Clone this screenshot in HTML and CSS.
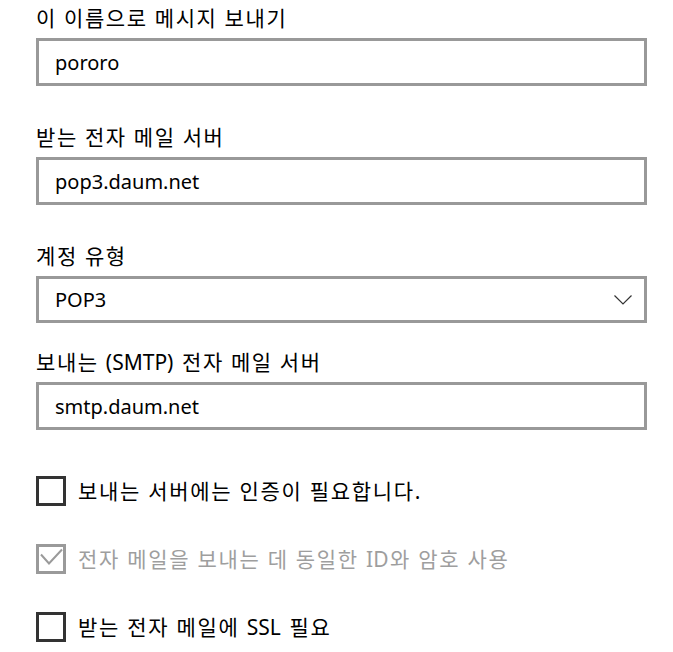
FILE: index.html
```html
<!DOCTYPE html>
<html lang="ko">
<head>
<meta charset="utf-8">
<link rel="stylesheet" href="styles.css">
</head>
<body>
<div class="form">
  <div class="field">
    <div class="label">이 이름으로 메시지 보내기</div>
    <div class="box">pororo</div>
  </div>
  <div class="field">
    <div class="label">받는 전자 메일 서버</div>
    <div class="box">pop3.daum.net</div>
  </div>
  <div class="field field-select">
    <div class="label">계정 유형</div>
    <div class="box select"><span>POP3</span>
      <svg class="chev" width="18" height="10" viewBox="0 0 18 10"><path d="M0.5 0.5 L9 9 L17.5 0.5" fill="none" stroke="#333" stroke-width="1.2"/></svg>
    </div>
  </div>
  <div class="field field-last">
    <div class="label">보내는 <span class="en">(SMTP)</span> 전자 메일 서버</div>
    <div class="box">smtp.daum.net</div>
  </div>
  <div class="checks">
    <div class="check">
      <span class="cb"></span>
      <span class="ctext">보내는 서버에는 인증이 필요합니다.</span>
    </div>
    <div class="check disabled">
      <span class="cb"><svg width="24" height="24" viewBox="0 0 24 24"><path d="M2 7.5 L10 16.5 L23 2.5" fill="none" stroke="#9a9a9a" stroke-width="2"/></svg></span>
      <span class="ctext">전자 메일을 보내는 데 동일한 <span class="en">ID</span>와 암호 사용</span>
    </div>
    <div class="check">
      <span class="cb"></span>
      <span class="ctext">받는 전자 메일에 <span class="en">SSL</span> 필요</span>
    </div>
  </div>
</div>
</body>
</html>
```
FILE: styles.css
```css
html, body {
  margin: 0;
  padding: 0;
  background: #fff;
}
body {
  font-family: "Noto Sans", "Noto Sans CJK KR", sans-serif;
  color: #000;
}
.form {
  padding: 4px 26px 0 36px;
  display: flex;
  flex-direction: column;
}
.field {
  display: flex;
  flex-direction: column;
  gap: 6px;
  margin-bottom: 37px;
}
.field-select {
  margin-bottom: 25px;
}
.field-last {
  margin-bottom: 46px;
}
.label {
  font-size: 21px;
  line-height: 28px;
  height: 28px;
  letter-spacing: 1.6px;
}
.en {
  letter-spacing: 0;
  margin-right: 1.6px;
}
.box {
  box-sizing: border-box;
  height: 48px;
  border: 3px solid #999;
  padding: 0 16px;
  display: flex;
  align-items: center;
  font-size: 20px;
}
.select {
  height: 47px;
  justify-content: space-between;
  padding-right: 12px;
}
.checks {
  display: flex;
  flex-direction: column;
  gap: 38px;
}
.check {
  display: flex;
  align-items: center;
  gap: 12px;
  height: 30px;
}
.cb {
  box-sizing: border-box;
  width: 30px;
  height: 30px;
  border: 3px solid #333;
  display: flex;
  align-items: center;
  justify-content: center;
}
.ctext {
  font-size: 21px;
  line-height: 28px;
  letter-spacing: 1.7px;
}
.disabled .cb {
  border-color: #9a9a9a;
}
.disabled .ctext {
  color: #9e9e9e;
}
```
